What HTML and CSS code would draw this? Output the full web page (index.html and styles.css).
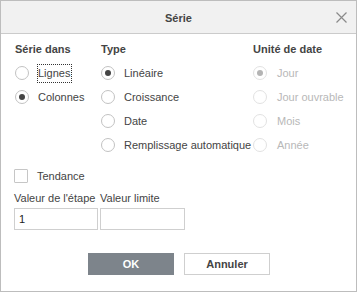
FILE: index.html
```html
<!DOCTYPE html>
<html lang="fr">
<head>
<meta charset="utf-8">
<title>Série</title>
<link rel="stylesheet" href="styles.css">
</head>
<body>
<div class="dialog">
  <div class="header">
    <span></span>
    <span class="title">Série</span>
    <svg class="close" width="11" height="11" viewBox="0 0 11 11"><path d="M0.5 0.5 L10.5 10.5 M10.5 0.5 L0.5 10.5" stroke="#8a8a8a" stroke-width="1.2" fill="none"/></svg>
  </div>
  <div class="content">
    <div class="columns">
      <div class="col col-1">
        <div class="heading">Série dans</div>
        <div class="row"><span class="radio"></span><span class="lbl focus">Lignes</span></div>
        <div class="row"><span class="radio checked"></span><span class="lbl">Colonnes</span></div>
      </div>
      <div class="col col-2">
        <div class="heading">Type</div>
        <div class="row"><span class="radio checked"></span><span class="lbl">Linéaire</span></div>
        <div class="row"><span class="radio"></span><span class="lbl">Croissance</span></div>
        <div class="row"><span class="radio"></span><span class="lbl">Date</span></div>
        <div class="row"><span class="radio"></span><span class="lbl">Remplissage automatique</span></div>
      </div>
      <div class="col col-3 disabled">
        <div class="heading">Unité de date</div>
        <div class="row"><span class="radio checked"></span><span class="lbl">Jour</span></div>
        <div class="row"><span class="radio"></span><span class="lbl">Jour ouvrable</span></div>
        <div class="row"><span class="radio"></span><span class="lbl">Mois</span></div>
        <div class="row"><span class="radio"></span><span class="lbl">Année</span></div>
      </div>
    </div>
    <div class="check-row"><span class="checkbox"></span><span class="lbl">Tendance</span></div>
    <div class="fields">
      <div class="field f1">
        <div class="flabel">Valeur de l'étape</div>
        <div class="input">1</div>
      </div>
      <div class="field f2">
        <div class="flabel">Valeur limite</div>
        <div class="input"></div>
      </div>
    </div>
  </div>
  <div class="footer">
    <div class="btn primary">OK</div>
    <div class="btn">Annuler</div>
  </div>
</div>
</body>
</html>
```
FILE: styles.css
```css
html, body {
  margin: 0;
  padding: 0;
  background: #fff;
}
.dialog {
  box-sizing: border-box;
  width: 357px;
  height: 292px;
  border: 1px solid #bdbdbd;
  font-family: "Liberation Sans", Arial, sans-serif;
  font-size: 11px;
  color: #444;
  display: flex;
  flex-direction: column;
}
.header {
  height: 32px;
  background: #f1f1f1;
  border-bottom: 1px solid #cbcbcb;
  display: grid;
  grid-template-columns: 1fr auto 1fr;
  align-items: center;
}
.title {
  font-weight: bold;
  font-size: 11px;
  margin-top: 1px;
}
.close {
  justify-self: end;
  margin-right: 9px;
  margin-top: 1px;
}
.content {
  padding: 9px 0 0 13px;
}
.columns {
  display: flex;
}
.col-1 { width: 86px; margin-left: 1px; }
.col-2 { width: 152px; }
.heading {
  font-weight: bold;
  line-height: 13px;
  height: 13px;
  margin-bottom: 5px;
}
.row {
  height: 24px;
  display: flex;
  align-items: center;
}
.radio {
  box-sizing: border-box;
  width: 14px;
  height: 14px;
  border: 1px solid #c2c2c2;
  border-radius: 50%;
  display: flex;
  align-items: center;
  justify-content: center;
  margin-right: 8px;
  flex: none;
}
.radio.checked::after {
  content: "";
  width: 6px;
  height: 6px;
  border-radius: 50%;
  background: #444;
}
.lbl {
  border: 1px dotted transparent;
  padding: 2px 1px 2px 0;
  line-height: 13px;
  white-space: nowrap;
}
.lbl.focus {
  border-color: #333;
}
.col-3 .radio { margin-right: 9px; }
.disabled .row .lbl { color: #b8b8b8; }
.disabled .radio { border-color: #e2e2e2; }
.disabled .radio.checked::after { background: #b4b4b4; }
.check-row {
  margin-top: 7px;
  height: 24px;
  display: flex;
  align-items: center;
}
.checkbox {
  box-sizing: border-box;
  width: 14px;
  height: 14px;
  border: 1px solid #c6c6c6;
  border-radius: 1px;
  margin-right: 8px;
}
.fields {
  display: flex;
  gap: 2px;
  margin-top: 4px;
}
.f1 { width: 84px; }
.f2 { width: 85px; }
.flabel {
  line-height: 13px;
  height: 13px;
  margin-bottom: 3px;
  white-space: nowrap;
}
.input {
  box-sizing: border-box;
  height: 22px;
  border: 1px solid #cfcfcf;
  padding: 0 4px;
  line-height: 20px;
  font-size: 11px;
  color: #222;
}
.footer {
  margin-top: 23px;
  display: flex;
  justify-content: center;
  gap: 10px;
  margin-left: 1px;
}
.btn {
  box-sizing: border-box;
  width: 86px;
  height: 22px;
  border: 1px solid #cfcfcf;
  font-weight: bold;
  display: flex;
  align-items: center;
  justify-content: center;
  color: #444;
}
.btn.primary {
  background: #7d848b;
  border-color: #7d848b;
  color: #fff;
}
```
